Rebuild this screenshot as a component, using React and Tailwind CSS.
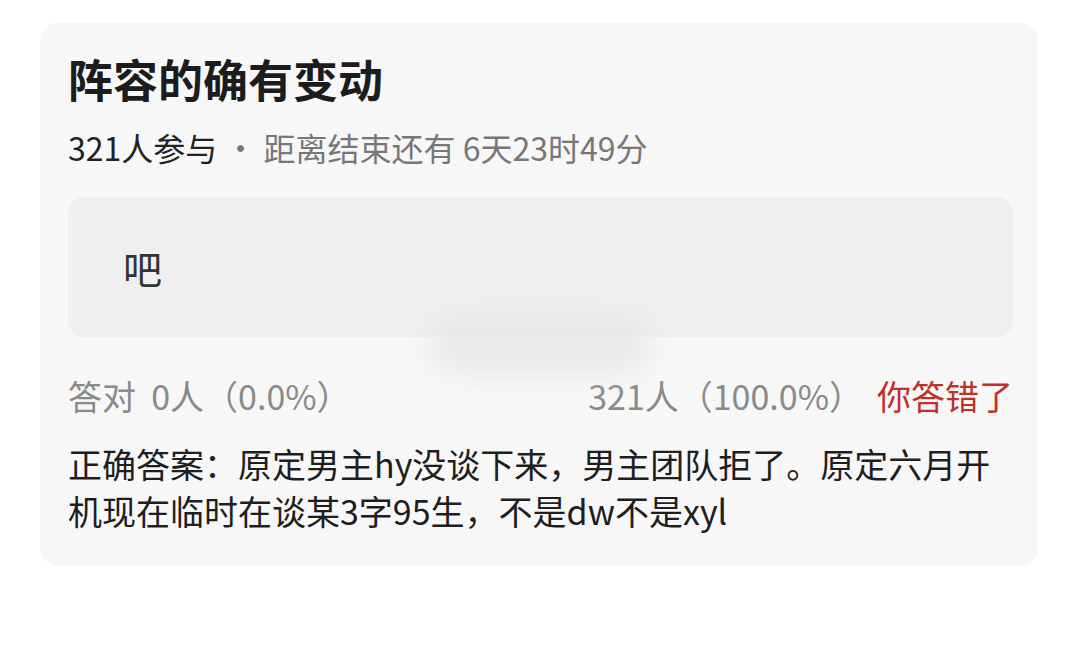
const font = { fontFamily: '"Noto Sans CJK SC", "Noto Sans", sans-serif' };

const PollResult = () => {
    return (
        <div className="w-[1080px] h-[671px] bg-white overflow-hidden" style={font}>
            <div className="pt-[23px] pl-[40px]">
                <div className="relative w-[998px] h-[542px] bg-[#f7f7f7] rounded-[18px] pl-[28px] pr-[25px] pt-[56px]">
                    <h2 className="text-[45px] leading-[56px] font-bold text-[#1c1c1c] -mt-[28px]">阵容的确有变动</h2>
                    <p className="mt-[20px] text-[32px] leading-[40px] text-[#777]">
                        <span className="text-[#222]">321人参与</span> · 距离结束还有 6天23时49分
                    </p>

                    {/* option box */}
                    <div className="mt-[30px] h-[140px] bg-[#efefef] rounded-[16px] flex items-center pl-[55px]">
                        <span className="text-[39px] text-[#333]">吧</span>
                    </div>

                    {/* smudge over the option box */}
                    <div className="absolute left-[390px] top-[295px] w-[220px] h-[55px] rounded-full bg-[#e4e4e4] blur-[14px] opacity-70" />

                    <div className="mt-[37px] flex items-center justify-between text-[34px] leading-[44px] text-[#8a8a8a]">
                        <span>答对&nbsp;&nbsp;0人（0.0%）</span>
                        <span>
                            321人（100.0%）<span className="text-[#c0302a] ml-[14px]">你答错了</span>
                        </span>
                    </div>

                    <p className="mt-[22px] text-[34px] leading-[47px] text-[#1e1e1e]">
                        正确答案：原定男主hy没谈下来，男主团队拒了。原定六月开机现在临时在谈某3字95生，不是dw不是xyl
                    </p>
                </div>
            </div>
        </div>
    );
};

export default function App() {
    return <PollResult />;
}
